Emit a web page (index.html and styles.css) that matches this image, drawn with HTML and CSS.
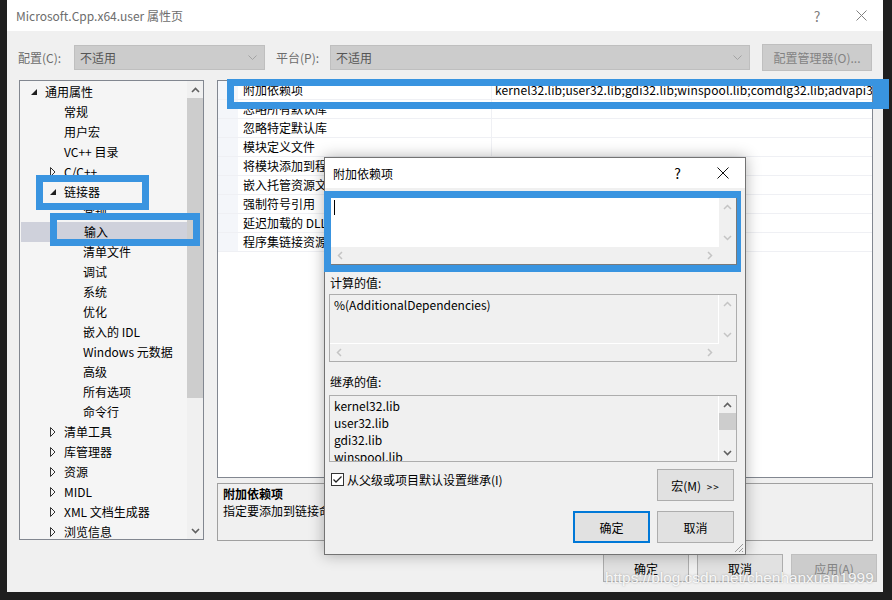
FILE: index.html
```html
<!DOCTYPE html>
<html lang="zh-CN">
<head>
<meta charset="utf-8">
<title>Microsoft.Cpp.x64.user 属性页</title>
<link rel="stylesheet" href="styles.css">
</head>
<body>
<div class="window">
  <div class="titlebar">
    <span class="title">Microsoft.Cpp.x64.user 属性页</span>
    <span class="cap-btn">?</span>
    <span class="cap-btn"><svg width="11" height="11" viewBox="0 0 11 11"><path d="M0.5 0.5L10.5 10.5M10.5 0.5L0.5 10.5" stroke="#808080" fill="none"/></svg></span>
  </div>

  <div class="toolbar">
    <span class="tb-label">配置(C):</span>
    <div class="combo combo-config"><span>不适用</span><svg width="9" height="5" viewBox="0 0 9 5"><path d="M0.5 0.5L4.5 4.5L8.5 0.5" fill="none" stroke="#a3a3a3"/></svg></div>
    <span class="tb-label tb-label2">平台(P):</span>
    <div class="combo combo-platform"><span>不适用</span><svg width="9" height="5" viewBox="0 0 9 5"><path d="M0.5 0.5L4.5 4.5L8.5 0.5" fill="none" stroke="#a3a3a3"/></svg></div>
    <button class="btn btn-disabled btn-manager">配置管理器(O)...</button>
  </div>

  <div class="main">
    <div class="tree">
      <div class="tree-list">
        <div class="node l0"><span class="tw"><svg width="6" height="6" viewBox="0 0 6 6"><path d="M6 0L6 6L0 6Z" fill="#1e1e1e"/></svg></span>通用属性</div>
        <div class="node l1"><span class="tw"></span>常规</div>
        <div class="node l1"><span class="tw"></span>用户宏</div>
        <div class="node l1"><span class="tw"></span>VC++ 目录</div>
        <div class="node l1"><span class="tw"><svg width="6" height="10" viewBox="0 0 6 10"><path d="M0.5 0.5L5 5L0.5 9.5Z" fill="none" stroke="#333"/></svg></span>C/C++</div>
        <div class="node l1"><span class="tw"><svg width="6" height="6" viewBox="0 0 6 6"><path d="M6 0L6 6L0 6Z" fill="#1e1e1e"/></svg></span>链接器</div>
        <div class="node l2"><span class="tw"></span>常规</div>
        <div class="node l2 selected"><span class="tw"></span>输入</div>
        <div class="node l2"><span class="tw"></span>清单文件</div>
        <div class="node l2"><span class="tw"></span>调试</div>
        <div class="node l2"><span class="tw"></span>系统</div>
        <div class="node l2"><span class="tw"></span>优化</div>
        <div class="node l2"><span class="tw"></span>嵌入的 IDL</div>
        <div class="node l2"><span class="tw"></span>Windows 元数据</div>
        <div class="node l2"><span class="tw"></span>高级</div>
        <div class="node l2"><span class="tw"></span>所有选项</div>
        <div class="node l2"><span class="tw"></span>命令行</div>
        <div class="node l1"><span class="tw"><svg width="6" height="10" viewBox="0 0 6 10"><path d="M0.5 0.5L5 5L0.5 9.5Z" fill="none" stroke="#333"/></svg></span>清单工具</div>
        <div class="node l1"><span class="tw"><svg width="6" height="10" viewBox="0 0 6 10"><path d="M0.5 0.5L5 5L0.5 9.5Z" fill="none" stroke="#333"/></svg></span>库管理器</div>
        <div class="node l1"><span class="tw"><svg width="6" height="10" viewBox="0 0 6 10"><path d="M0.5 0.5L5 5L0.5 9.5Z" fill="none" stroke="#333"/></svg></span>资源</div>
        <div class="node l1"><span class="tw"><svg width="6" height="10" viewBox="0 0 6 10"><path d="M0.5 0.5L5 5L0.5 9.5Z" fill="none" stroke="#333"/></svg></span>MIDL</div>
        <div class="node l1"><span class="tw"><svg width="6" height="10" viewBox="0 0 6 10"><path d="M0.5 0.5L5 5L0.5 9.5Z" fill="none" stroke="#333"/></svg></span>XML 文档生成器</div>
        <div class="node l1"><span class="tw"><svg width="6" height="10" viewBox="0 0 6 10"><path d="M0.5 0.5L5 5L0.5 9.5Z" fill="none" stroke="#333"/></svg></span>浏览信息</div>
      </div>
      <div class="vscroll">
        <div class="sb-btn"><svg width="9" height="6" viewBox="0 0 9 6"><path d="M1 5L4.5 1.5L8 5" fill="none" stroke="#606060" stroke-width="1.6"/></svg></div>
        <div class="sb-thumb tree-thumb"></div>
        <div class="sb-track"></div>
        <div class="sb-btn"><svg width="9" height="6" viewBox="0 0 9 6"><path d="M1 1L4.5 4.5L8 1" fill="none" stroke="#606060" stroke-width="1.6"/></svg></div>
      </div>
    </div>

    <div class="right-col">
      <div class="grid">
        <div class="grid-row"><span class="gutter"></span><span class="pname">附加依赖项</span><span class="pval">kernel32.lib;user32.lib;gdi32.lib;winspool.lib;comdlg32.lib;advapi32.lib;shell32.lib;ole32.lib;oleaut32.lib;uuid.lib</span></div>
        <div class="grid-row"><span class="gutter"></span><span class="pname">忽略所有默认库</span><span class="pval"></span></div>
        <div class="grid-row"><span class="gutter"></span><span class="pname">忽略特定默认库</span><span class="pval"></span></div>
        <div class="grid-row"><span class="gutter"></span><span class="pname">模块定义文件</span><span class="pval"></span></div>
        <div class="grid-row"><span class="gutter"></span><span class="pname">将模块添加到程序集</span><span class="pval"></span></div>
        <div class="grid-row"><span class="gutter"></span><span class="pname">嵌入托管资源文件</span><span class="pval"></span></div>
        <div class="grid-row"><span class="gutter"></span><span class="pname">强制符号引用</span><span class="pval"></span></div>
        <div class="grid-row"><span class="gutter"></span><span class="pname">延迟加载的 DLL</span><span class="pval"></span></div>
        <div class="grid-row"><span class="gutter"></span><span class="pname">程序集链接资源</span><span class="pval"></span></div>
      </div>
      <div class="desc">
        <div class="desc-title">附加依赖项</div>
        <div>指定要添加到链接命令行的附加项。[例如 kernel32.lib]</div>
      </div>
    </div>
  </div>

  <div class="footer">
    <button class="btn">确定</button>
    <button class="btn">取消</button>
    <button class="btn btn-disabled">应用(A)</button>
  </div>
</div>

<div class="dialog">
  <div class="dlg-titlebar">
    <span class="title">附加依赖项</span>
    <span class="dlg-cap">?</span>
    <span class="dlg-cap"><svg width="12" height="12" viewBox="0 0 12 12"><path d="M0.5 0.5L11.5 11.5M11.5 0.5L0.5 11.5" stroke="#111" fill="none"/></svg></span>
  </div>
  <div class="dlg-body">
    <div class="textbox">
      <div class="tb-content"><span class="caret"></span></div>
      <div class="vbar">
        <svg width="9" height="6" viewBox="0 0 9 6"><path d="M1 5L4.5 1.5L8 5" fill="none" stroke="#c4c4c4" stroke-width="1.5"/></svg>
        <svg width="9" height="6" viewBox="0 0 9 6"><path d="M1 1L4.5 4.5L8 1" fill="none" stroke="#c4c4c4" stroke-width="1.5"/></svg>
      </div>
      <div class="hbar">
        <svg width="6" height="9" viewBox="0 0 6 9"><path d="M5 1L1.5 4.5L5 8" fill="none" stroke="#c4c4c4" stroke-width="1.5"/></svg>
        <svg width="6" height="9" viewBox="0 0 6 9"><path d="M1 1L4.5 4.5L1 8" fill="none" stroke="#c4c4c4" stroke-width="1.5"/></svg>
      </div>
      <div class="corner"></div>
    </div>

    <div class="dlg-label label-eval">计算的值:</div>
    <div class="textbox readonly">
      <div class="tb-content">%(AdditionalDependencies)</div>
      <div class="vbar">
        <svg width="9" height="6" viewBox="0 0 9 6"><path d="M1 5L4.5 1.5L8 5" fill="none" stroke="#c4c4c4" stroke-width="1.5"/></svg>
        <svg width="9" height="6" viewBox="0 0 9 6"><path d="M1 1L4.5 4.5L8 1" fill="none" stroke="#c4c4c4" stroke-width="1.5"/></svg>
      </div>
      <div class="hbar">
        <svg width="6" height="9" viewBox="0 0 6 9"><path d="M5 1L1.5 4.5L5 8" fill="none" stroke="#c4c4c4" stroke-width="1.5"/></svg>
        <svg width="6" height="9" viewBox="0 0 6 9"><path d="M1 1L4.5 4.5L1 8" fill="none" stroke="#c4c4c4" stroke-width="1.5"/></svg>
      </div>
      <div class="corner"></div>
    </div>

    <div class="dlg-label label-inherit">继承的值:</div>
    <div class="listbox">
      <div class="list-items">
        <div>kernel32.lib</div>
        <div>user32.lib</div>
        <div>gdi32.lib</div>
        <div>winspool.lib</div>
      </div>
      <div class="list-scroll">
        <div class="lsb-btn"><svg width="9" height="6" viewBox="0 0 9 6"><path d="M1 5L4.5 1.5L8 5" fill="none" stroke="#606060" stroke-width="1.6"/></svg></div>
        <div class="list-thumb"></div>
        <div class="sb-track"></div>
        <div class="lsb-btn"><svg width="9" height="6" viewBox="0 0 9 6"><path d="M1 1L4.5 4.5L8 1" fill="none" stroke="#606060" stroke-width="1.6"/></svg></div>
      </div>
    </div>

    <div class="dlg-row">
      <label class="check">
        <span class="box"><svg width="11" height="11" viewBox="0 0 11 11"><path d="M1.5 5.5L4 8L9.5 2.5" fill="none" stroke="#222" stroke-width="1.3"/></svg></span>
        从父级或项目默认设置继承(I)
      </label>
      <button class="btn dlg-btn">宏(M) <span class="chev">&gt;&gt;</span></button>
    </div>
    <div class="dlg-buttons">
      <button class="btn dlg-btn default">确定</button>
      <button class="btn dlg-btn">取消</button>
    </div>
  </div>
  <svg class="grip" width="12" height="12" viewBox="0 0 12 12"><path d="M11 3L3 11M11 7L7 11M11 10L10 11" stroke="#9a9a9a" fill="none"/></svg>
</div>

<div class="mark mark-linker"></div>
<div class="mark mark-input"></div>
<div class="mark mark-row"></div>
<div class="mark mark-text"></div>

<div class="watermark">https://blog.csdn.net/chenhanxuan1999</div>
</body>
</html>
```

FILE: styles.css
```css
*{
    box-sizing: border-box;
}
body{
    margin: 0;
    width: 892px;
    height: 600px;
    position: relative;
    overflow: hidden;
    background-color: #1f1f1f;
    font-family: "Noto Sans CJK SC", "Noto Sans", sans-serif;
    font-size: 12px;
    color: #000;
}
.window{
    margin-left: 7px;
    width: 876px;
    height: 592px;
    background-color: #f0f0f0;
    display: flex;
    flex-direction: column;
}
.titlebar{
    height: 31px;
    background-color: #fff;
    display: flex;
    align-items: center;
    padding-left: 9px;
    color: #6d6d6d;
}
.title{
    flex: 1;
}
.cap-btn{
    width: 44px;
    height: 31px;
    display: flex;
    align-items: center;
    justify-content: center;
    font-size: 14px;
    color: #808080;
}

/* toolbar */
.toolbar{
    margin-top: 13px;
    height: 27px;
    display: flex;
    align-items: center;
    padding-left: 11px;
    color: #6d6d6d;
}
.tb-label{
    width: 56px;
}
.tb-label2{
    margin-left: 11px;
    width: 54px;
}
.combo{
    height: 25px;
    display: flex;
    align-items: center;
    justify-content: space-between;
    padding: 0 7px 0 5px;
    background-color: #cccccc;
    border: 1px solid #bfbfbf;
    color: #555;
}
.combo-config{
    width: 191px;
}
.combo-platform{
    width: 420px;
}
.btn{
    font-family: inherit;
    font-size: 12px;
    color: #000;
    background-color: #e1e1e1;
    border: 1px solid #adadad;
    padding: 0;
}
.btn-disabled{
    background-color: #cccccc;
    border-color: #bfbfbf;
    color: #838383;
}
.btn-manager{
    margin-left: 12px;
    width: 110px;
    height: 27px;
}

/* main area */
.main{
    margin-top: 9px;
    height: 461px;
    display: flex;
    padding-left: 12px;
    gap: 13px;
}
.tree{
    width: 185px;
    height: 460px;
    border: 1px solid #828790;
    background-color: #f5f5f5;
    display: flex;
}
.tree-list{
    flex: 1;
    padding-top: 1px;
}
.node{
    height: 20px;
    line-height: 20px;
    display: flex;
    align-items: center;
    white-space: nowrap;
}
.node.l0{
    padding-left: 11px;
}
.node.l1{
    padding-left: 30px;
}
.node.l2{
    padding-left: 49px;
}
.node.selected{
    background-color: #cfd1db;
    margin-left: 1px;
}
.tw{
    width: 14px;
    flex: none;
    display: flex;
    align-items: center;
}
.vscroll{
    width: 16px;
    display: flex;
    flex-direction: column;
    background-color: #f0f0f0;
}
.sb-btn{
    height: 17px;
    display: flex;
    align-items: center;
    justify-content: center;
}
.tree-thumb{
    height: 300px;
    background-color: #cdcdcd;
}
.sb-track{
    flex: 1;
}

.right-col{
    width: 656px;
    display: flex;
    flex-direction: column;
    gap: 5px;
}
.grid{
    height: 398px;
    border: 1px solid #828790;
    background-color: #fff;
}
.grid-row{
    height: 19px;
    line-height: 18px;
    display: flex;
    border-bottom: 1px solid #eff0f4;
}
.gutter{
    width: 20px;
    flex: none;
    background-color: #f4f6fa;
}
.pname{
    width: 254px;
    flex: none;
    padding-left: 5px;
    border-right: 1px solid #eff0f4;
    white-space: nowrap;
    overflow: hidden;
}
.pval{
    flex: 1;
    padding-left: 3px;
    white-space: nowrap;
    overflow: hidden;
    letter-spacing: 0.1px;
}
.desc{
    flex: 1;
    border: 1px solid #a0a0a0;
    padding: 1px 5px;
    line-height: 17px;
}
.desc-title{
    font-weight: bold;
}

.footer{
    margin-top: 13px;
    display: flex;
    justify-content: flex-end;
    gap: 8px;
    padding-right: 6px;
}
.footer .btn{
    width: 86px;
    height: 28px;
}

/* dialog */
.dialog{
    position: absolute;
    left: 324px;
    top: 157px;
    width: 422px;
    height: 398px;
    border: 1px solid #737373;
    background-color: #f0f0f0;
    box-shadow: 0 0 14px rgba(0, 0, 0, 0.3);
    display: flex;
    flex-direction: column;
}
.dlg-titlebar{
    height: 30px;
    background-color: #fff;
    display: flex;
    align-items: center;
    padding-left: 8px;
}
.dlg-cap{
    width: 45px;
    height: 30px;
    display: flex;
    align-items: center;
    justify-content: center;
    font-size: 14px;
}
.dlg-body{
    display: flex;
    flex-direction: column;
    padding: 0 8px 0 4px;
}
.textbox{
    margin-top: 9px;
    margin-left: 1px;
    height: 68px;
    border: 1px solid #7a7a7a;
    background-color: #fff;
    display: grid;
    grid-template-columns: 1fr 17px;
    grid-template-rows: 1fr 17px;
}
.tb-content{
    padding: 2px 3px;
    line-height: 17px;
}
.caret{
    display: inline-block;
    width: 1px;
    height: 15px;
    background-color: #000;
    vertical-align: top;
}
.vbar{
    background-color: #f0f0f0;
    display: flex;
    flex-direction: column;
    justify-content: space-between;
    align-items: center;
    padding: 6px 0;
}
.hbar{
    background-color: #f0f0f0;
    display: flex;
    justify-content: space-between;
    align-items: center;
    padding: 0 6px;
}
.corner{
    background-color: #f0f0f0;
}
.textbox.readonly{
    margin-top: 3px;
    margin-left: 0;
    width: 408px;
    border-color: #adadad;
    background-color: #f0f0f0;
}
.readonly .tb-content{
    padding: 1px 4px;
    border-right: 1px solid #fff;
    border-bottom: 1px solid #fff;
}
.dlg-label{
    line-height: 17px;
    padding-left: 1px;
}
.label-eval{
    margin-top: 9px;
}
.label-inherit{
    margin-top: 11px;
}
.listbox{
    margin-top: 5px;
    height: 67px;
    border: 1px solid #adadad;
    background-color: #f0f0f0;
    display: flex;
}
.list-items{
    flex: 1;
    padding: 1px 4px;
    line-height: 17px;
    overflow: hidden;
    border-right: 1px solid #fff;
}
.list-scroll{
    width: 17px;
    display: flex;
    flex-direction: column;
}
.lsb-btn{
    height: 17px;
    display: flex;
    align-items: center;
    justify-content: center;
}
.list-thumb{
    height: 17px;
    background-color: #cdcdcd;
}
.dlg-row{
    margin-top: 7px;
    height: 32px;
    display: flex;
    justify-content: space-between;
    padding-right: 3px;
}
.check{
    margin-top: 2px;
    padding-left: 2px;
    display: flex;
    align-items: center;
    gap: 3px;
    height: 17px;
}
.box{
    width: 13px;
    height: 13px;
    border: 1px solid #333;
    background-color: #fff;
    display: flex;
}
.dlg-btn{
    width: 77px;
    height: 32px;
}
.chev{
    font-size: 10px;
    margin-left: 3px;
    letter-spacing: 1px;
}
.dlg-buttons{
    margin-top: 10px;
    display: flex;
    justify-content: flex-end;
    gap: 7px;
    padding-right: 3px;
}
.dlg-btn.default{
    border: 2px solid #0078d7;
}
.grip{
    position: absolute;
    right: 1px;
    bottom: 1px;
}

/* annotation boxes */
.mark{
    position: absolute;
    border: 7px solid #3994e0;
}
.mark-linker{
    left: 36px;
    top: 175px;
    width: 113px;
    height: 35px;
}
.mark-input{
    left: 50px;
    top: 213px;
    width: 150px;
    height: 33px;
}
.mark-row{
    left: 227px;
    top: 79px;
    width: 662px;
    height: 30px;
    border-right-width: 16px;
}
.mark-text{
    left: 324px;
    top: 191px;
    width: 417px;
    height: 81px;
    border-right-width: 4px;
}

.watermark{
    position: absolute;
    left: 605px;
    top: 569px;
    font-family: "Liberation Sans", sans-serif;
    font-size: 15.4px;
    color: rgba(255, 255, 255, 0.9);
    text-shadow: 0 0 2px rgba(120, 120, 120, 0.6);
}
```
